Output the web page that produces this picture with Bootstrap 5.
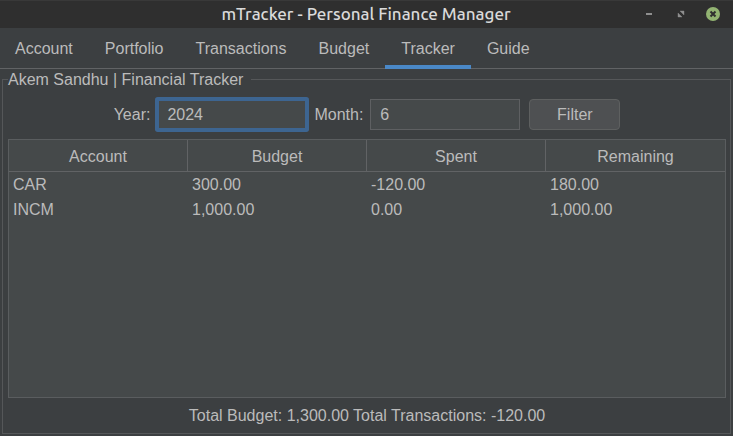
<!DOCTYPE html>
<html lang="en">
<head>
<meta charset="utf-8">
<meta name="viewport" content="width=device-width, initial-scale=1">
<title>mTracker - Personal Finance Manager</title>
<link href="https://cdn.jsdelivr.net/npm/bootstrap@5.3.0/dist/css/bootstrap.min.css" rel="stylesheet">
<style>
  body { background: #3c3f41; color: #bbb; font: 16px/18px "Liberation Sans", Arial, sans-serif; }
  .title-bar { height: 28px; background: #2f2f2f; border-top: 1px solid #393939; padding: 0 12px 1px 91px; }
  .title-bar h1 { font: 500 17px/26px Ubuntu, "Noto Sans", sans-serif; color: #dadada; }
  .win-btns { gap: 16px; }
  .win-btns button { width: 16px; height: 16px; }
  .win-btns svg { display: block; }
  .main-tabs { height: 41px; border-bottom: 1px solid #616365; }
  .main-tabs .nav-link { color: #bbb; padding: 12px 16px 7px; height: 41px; border-bottom: 4px solid transparent; border-radius: 0; }
  .main-tabs .nav-link:first-child { padding-left: 15px; }
  .main-tabs .nav-link.active { border-bottom-color: #4a88c7; }
  .tracker { border: 1px solid #555759; margin: 1px 2px 2px; padding: 0 4px 0 5px; }
  .tracker legend { float: none; width: auto; font-size: 16px; line-height: 18px; padding: 1px 8px 0 0; margin: 0; }
  .filters { gap: 7px; padding: 10px 0 9px; }
  .filters .form-control { width: 150px; height: 31px; padding: 0 9px; font-size: 16px; color: #bbb; background: #45494a; border: 1px solid #5e6062; border-radius: 0; box-shadow: none; }
  .filters .form-control.current { border: 2px solid #3d6591; box-shadow: 0 0 0 2px #3d6591; border-radius: 1px; padding: 0 8px; }
  .filters .btn { width: 91px; height: 31px; padding: 0; margin-left: 2px; font-size: 16px; color: #bbb; background: #4e5052; border: 1px solid #5e6060; border-radius: 4px; }
  .grid-pane { background: #45494a; border: 1px solid #5a5d5f; }
  .grid-pane table { table-layout: fixed; width: 100%; border-collapse: separate; border-spacing: 0; }
  .grid-pane th { font-weight: 400; text-align: center; height: 32px; padding: 2px 0 0; border-right: 1px solid #616365; border-bottom: 1px solid #616365; }
  .grid-pane th:last-child { border-right: 0; }
  .grid-pane td { height: 25px; padding: 0 4px; }
  .totals { padding: 9px 0 8px; }
</style>
</head>
<body class="vh-100 d-flex flex-column overflow-hidden">
<header class="title-bar d-flex align-items-center">
  <h1 class="flex-fill text-center m-0">mTracker - Personal Finance Manager</h1>
  <div class="win-btns d-flex">
    <button type="button" class="btn p-0 border-0" aria-label="Minimize"><svg width="16" height="16"><path d="M5 7h6v2H5z" fill="#8f8f8f"/></svg></button>
    <button type="button" class="btn p-0 border-0" aria-label="Maximize"><svg width="16" height="16"><path d="M7 5h4v4zM5 7v4h4z" fill="#8f8f8f" stroke="#8f8f8f" stroke-width=".4"/></svg></button>
    <button type="button" class="btn p-0 border-0" aria-label="Close"><svg width="16" height="16"><circle cx="8" cy="8" r="7" fill="#92b372"/><path d="M5.500 5.500l5 5M10.500 5.500l-5 5" stroke="#2f2f2f" stroke-width="2"/></svg></button>
  </div>
</header>
<nav class="main-tabs nav flex-nowrap" aria-label="Sections">
  <a class="nav-link" href="#account">Account</a>
  <a class="nav-link" href="#portfolio">Portfolio</a>
  <a class="nav-link" href="#transactions">Transactions</a>
  <a class="nav-link" href="#budget">Budget</a>
  <a class="nav-link active" href="#tracker" aria-current="page">Tracker</a>
  <a class="nav-link" href="#guide">Guide</a>
</nav>
<fieldset class="tracker flex-fill d-flex flex-column" id="tracker">
  <legend>Akem Sandhu | Financial Tracker</legend>
  <form class="filters d-flex justify-content-center align-items-center">
    <label for="year">Year:</label>
    <input class="form-control current" id="year" type="text" value="2024">
    <label for="month">Month:</label>
    <input class="form-control" id="month" type="text" value="6">
    <button class="btn" type="button">Filter</button>
  </form>
  <div class="grid-pane flex-fill">
    <table>
      <thead><tr><th scope="col">Account</th><th scope="col">Budget</th><th scope="col">Spent</th><th scope="col">Remaining</th></tr></thead>
      <tbody>
        <tr><td>CAR</td><td>300.00</td><td>-120.00</td><td>180.00</td></tr>
        <tr><td>INCM</td><td>1,000.00</td><td>0.00</td><td>1,000.00</td></tr>
      </tbody>
    </table>
  </div>
  <div class="totals text-center">Total Budget: 1,300.00 Total Transactions: -120.00</div>
</fieldset>
<script src="https://cdn.jsdelivr.net/npm/bootstrap@5.3.0/dist/js/bootstrap.bundle.min.js"></script>
</body>
</html>
